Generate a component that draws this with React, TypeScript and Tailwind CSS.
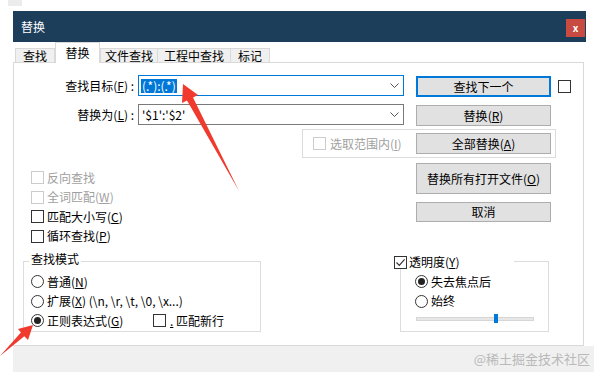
import React from "react";

function Check({ disabled, checked }: { disabled?: boolean; checked?: boolean }) {
  return (
    <span
      className={`flex h-[13px] w-[13px] shrink-0 items-center justify-center border bg-white ${
        disabled ? "border-[#cccccc]" : "border-[#333333]"
      }`}
    >
      {checked && (
        <svg width="11" height="11" viewBox="0 0 11 11">
          <path d="M1.5 5.5 L4.3 8.3 L9.6 2.4" fill="none" stroke="#333" strokeWidth="1.2" />
        </svg>
      )}
    </span>
  );
}

function Radio({ on }: { on?: boolean }) {
  return (
    <span className="flex h-[13px] w-[13px] shrink-0 items-center justify-center rounded-full border border-[#333333] bg-white">
      {on && <span className="h-[7px] w-[7px] rounded-full bg-[#222222]" />}
    </span>
  );
}

// access key, e.g. (F) with the letter underlined
function K({ c }: { c: string }) {
  return (
    <span>
      (<span className="underline underline-offset-1">{c}</span>)
    </span>
  );
}

function Btn({ children, className = "" }: { children: React.ReactNode; className?: string }) {
  return (
    <div className={`flex w-[135px] shrink-0 items-center justify-center bg-[#e1e1e1] ${className}`}>
      {children}
    </div>
  );
}

function Chevron() {
  return (
    <svg width="9" height="5" viewBox="0 0 9 5" className="ml-auto mr-[4px]">
      <path d="M0.5 0.5 L4.5 4.5 L8.5 0.5" fill="none" stroke="#555" />
    </svg>
  );
}

export default function App() {
  return (
    <div className="relative h-[372px] w-[594px] overflow-hidden bg-white font-['Noto_Sans_CJK_SC',sans-serif] text-[12px] leading-[14px] text-black">
      <div className="h-[11px]">
        <div className="ml-[8px] h-[6px] w-[14px] bg-[#ececec]" />
      </div>

      <div className="ml-[13px] flex w-[581px] flex-col">
        {/* Title bar */}
        <div className="flex h-[31px] w-[573px] items-center justify-between bg-[#1d3e5b] pl-[8px] pr-[1px]">
          <span className="text-white">替换</span>
          <span className="mt-[3px] flex h-[18px] w-[19px] items-center justify-center bg-[#c94a41] text-[10px] font-bold leading-none text-white">
            x
          </span>
        </div>

        {/* Tabs */}
        <div className="flex h-[20px] w-[573px] items-end pl-[2px]">
          <div className="flex h-[14px] w-[40px] items-center justify-center border border-b-0 border-[#d9d9d9] bg-[#f0f0f0]">
            查找
          </div>
          <div className="relative z-10 -mb-px flex h-[21px] w-[45px] justify-center border border-b-0 border-[#d9d9d9] bg-white pt-[3px]">
            替换
          </div>
          <div className="flex h-[14px] w-[58px] items-center justify-center border border-b-0 border-[#d9d9d9] bg-[#f0f0f0]">
            文件查找
          </div>
          <div className="flex h-[14px] w-[73px] items-center justify-center border border-b-0 border-l-0 border-[#d9d9d9] bg-[#f0f0f0]">
            工程中查找
          </div>
          <div className="flex h-[14px] w-[39px] items-center justify-center border border-b-0 border-l-0 border-[#d9d9d9] bg-[#f0f0f0]">
            标记
          </div>
        </div>

        {/* Tab panel */}
        <div className="flex h-[284px] w-[571px] flex-col border border-[#d9d9d9] bg-white">
          {/* Find what */}
          <div className="mt-[12px] flex h-[22px] items-start">
            <div className="flex h-[21px] w-[124px] items-center justify-end pr-[4px]">
              查找目标<K c="F" />&nbsp;:
            </div>
            <div className="flex h-[21px] w-[266px] items-center border border-[#0078d7] bg-white pl-[2px]">
              <span className="bg-[#0078d7] px-[1px] text-white">(.*):(.*)</span>
              <Chevron />
            </div>
            <Btn className="ml-[12px] mt-[1px] h-[21px] border-2 border-[#0078d7]">查找下一个</Btn>
            <div className="ml-[7px] mt-[5px]">
              <Check />
            </div>
          </div>

          {/* Replace with */}
          <div className="mt-[7px] flex h-[22px] items-start">
            <div className="flex h-[21px] w-[124px] items-center justify-end pr-[4px]">
              替换为<K c="L" />&nbsp;:
            </div>
            <div className="flex h-[21px] w-[266px] items-center border border-[#7a7a7a] bg-white pl-[3px]">
              <span>'$1':'$2'</span>
              <Chevron />
            </div>
            <Btn className="ml-[12px] mt-[1px] h-[21px] border border-[#adadad]">
              替换<K c="R" />
            </Btn>
          </div>

          {/* In selection */}
          <div className="ml-[288px] mt-[3px] flex h-[29px] w-[254px] items-center border border-[#dcdcdc] pl-[10px] pr-[4px]">
            <Check disabled />
            <span className="ml-[4px] text-[#a0a0a0]">
              选取范围内<K c="I" />
            </span>
            <Btn className="ml-auto h-[21px] border border-[#adadad]">
              全部替换<K c="A" />
            </Btn>
          </div>

          {/* Options + buttons */}
          <div className="flex h-[94px]">
            <div className="flex w-[402px] flex-col pl-[17px] pt-[10px]">
              <div className="flex h-[19.5px] items-center gap-[3px] text-[#a0a0a0]">
                <Check disabled />
                反向查找
              </div>
              <div className="flex h-[19.5px] items-center gap-[3px] text-[#a0a0a0]">
                <Check disabled />
                <span>
                  全词匹配<K c="W" />
                </span>
              </div>
              <div className="flex h-[19.5px] items-center gap-[3px]">
                <Check />
                <span>
                  匹配大小写<K c="C" />
                </span>
              </div>
              <div className="flex h-[19.5px] items-center gap-[3px]">
                <Check />
                <span>
                  循环查找<K c="P" />
                </span>
              </div>
            </div>
            <div className="flex flex-col">
              <Btn className="mt-[5px] h-[31px] border border-[#adadad]">
                替换所有打开文件<K c="O" />
              </Btn>
              <Btn className="mt-[8px] h-[20px] border border-[#adadad]">取消</Btn>
            </div>
          </div>

          {/* Search mode + transparency */}
          <div className="flex items-start">
            <div className="ml-[9px] flex w-[238px] flex-col">
              <span className="relative z-10 ml-[6px] self-start bg-white px-[2px]">查找模式</span>
              <div className="-mt-[5px] flex h-[71px] flex-col border border-[#dcdcdc] pl-[7px] pt-[10px]">
                <div className="flex h-[19.5px] items-center gap-[3px]">
                  <Radio />
                  <span>
                    普通<K c="N" />
                  </span>
                </div>
                <div className="flex h-[19.5px] items-center gap-[3px]">
                  <Radio />
                  <span>
                    扩展<K c="X" /> (\n, \r, \t, \0, \x...)
                  </span>
                </div>
                <div className="flex h-[19.5px] items-center">
                  <div className="flex w-[122px] items-center gap-[3px]">
                    <Radio on />
                    <span>
                      正则表达式<K c="G" />
                    </span>
                  </div>
                  <Check />
                  <span className="ml-[4px]">
                    <span className="underline">.</span> 匹配新行
                  </span>
                </div>
              </div>
            </div>

            <div className="ml-[133px] mt-[3px] flex w-[155px] flex-col">
              <div className="relative z-10 flex h-[14px] w-[120px] items-center gap-[2px] bg-white">
                <Check checked />
                <span>
                  透明度<K c="Y" />
                </span>
              </div>
              <div className="-mt-[8px] ml-[6px] flex h-[71px] w-[149px] flex-col border border-[#dcdcdc] pl-[14px] pt-[10px]">
                <div className="flex h-[19.5px] items-center gap-[3px]">
                  <Radio on />
                  失去焦点后
                </div>
                <div className="flex h-[19.5px] items-center gap-[3px]">
                  <Radio />
                  始终
                </div>
                <div className="relative ml-[1px] mt-[3px] flex h-[9px] w-[118px] items-center">
                  <div className="h-[4px] w-full border border-[#d6d6d6] bg-[#e7e7e7]" />
                  <div className="absolute left-[78px] top-0 h-[9px] w-[4px] bg-[#0078d7]" />
                </div>
              </div>
            </div>
          </div>
        </div>

        {/* Bottom strip */}
        <div className="flex h-[26px] w-[581px] items-center justify-end bg-[#f0f0f0] pr-[4px] text-[13px] text-[#b9b9b9]">
          @稀土掘金技术社区
        </div>
      </div>

      {/* Red annotation arrows */}
      <svg className="pointer-events-none absolute left-0 top-0" width="594" height="372" viewBox="0 0 594 372">
        <polygon points="183,84 198,95 193,97.5 239,191 187,100.5 182,103" fill="#f03a2d" />
        <polygon points="33,325 28,340 24.3,336.3 0,356 20.9,332.5 18,329" fill="#f03a2d" />
      </svg>
    </div>
  );
}
